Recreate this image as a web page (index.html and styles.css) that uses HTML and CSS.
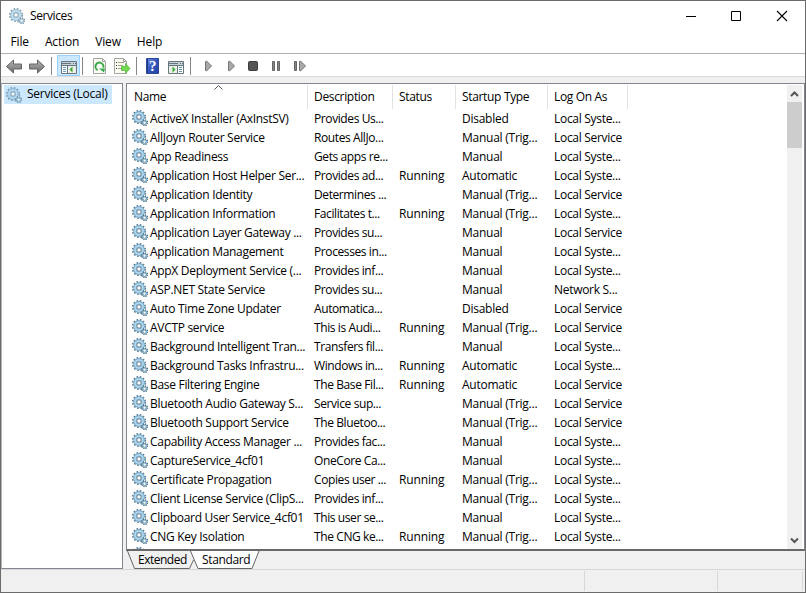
FILE: index.html
```html
<!DOCTYPE html>
<html lang="en">
<head>
<meta charset="utf-8">
<title>Services</title>
<link rel="stylesheet" href="styles.css">
</head>
<body>
<svg class="defs" width="0" height="0" aria-hidden="true">
  <defs>
    <linearGradient id="steel" x1="0" y1="0" x2="0" y2="1"><stop offset="0" stop-color="#b5b5b5"/><stop offset="1" stop-color="#6c6c6c"/></linearGradient>
    <linearGradient id="blue" x1="0" y1="0" x2="1" y2="1"><stop offset="0" stop-color="#7090e8"/><stop offset=".5" stop-color="#3355bd"/><stop offset="1" stop-color="#2442a0"/></linearGradient>
    <symbol id="gear" viewBox="0 0 16 16">
      <circle cx="7" cy="7" r="6.2" fill="none" stroke="#557a92" stroke-width="1.8" stroke-dasharray="1.6 1.65"/>
      <circle cx="7" cy="7" r="4.2" fill="#fff" stroke="#7eacc9" stroke-width="3.4"/>
      <circle cx="7" cy="7" r="4" fill="none" stroke="#b4daf0" stroke-width="1.6"/>
      <circle cx="7" cy="7" r="2.2" fill="#fff" stroke="#4f738c" stroke-width=".9"/>
      <circle cx="12.6" cy="12.7" r="2.8" fill="#9cc2d6" stroke="#4a6e83" stroke-width="1.5" stroke-dasharray="1.1 1.1"/>
      <circle cx="12.6" cy="12.7" r="1.5" fill="#fff" stroke="#84aec5" stroke-width="1"/>
    </symbol>
  </defs>
</svg>
<div class="window">
  <header class="titlebar">
    <svg class="gear pale"><use href="#gear"/></svg>
    <span class="title">Services</span>
    <svg class="controls" width="103" height="12" viewBox="0 0 103 12" fill="none" stroke="#000">
      <path d="M0 6.5h10M45.5 1.5h9v9h-9z"/><path d="M91 1l10 10M101 1L91 11" stroke-width="1.1"/>
    </svg>
  </header>
  <nav class="menu"><span>File</span><span>Action</span><span>View</span><span>Help</span></nav>
  <div class="toolbar">
    <svg width="400" height="22" viewBox="0 0 400 22">
      <g fill="url(#steel)" stroke="#646464" stroke-width="1" stroke-linejoin="round">
        <path d="M6.500 12.500l7-6.500v4h8v5h-8v4z"/><path d="M44.500 12.500l-7-6.500v4h-8v5h8v4z"/>
      </g>
      <path d="M51.500 3v18M82.500 3v18M136.500 3v18M190.500 3v18" stroke="#868686"/>
      <path d="M57.500 1.500h22v20h-22z" fill="#cce8ff" stroke="#99d1ff"/>
      <g>
        <path d="M61.500 7.500h15v12h-15z" fill="#fff" stroke="#68777f"/>
        <path d="M62 8h14v3H62z" fill="#c5d0d5"/><path d="M62 9.500h9M73 9.500h1M75 9.500h1M62 11.500h14M67.500 12v7" stroke="#68777f"/>
        <path d="M63 13.500h3M63 15.500h3M63 17.500h3" stroke="#6f9ab5"/><path d="M68 12h8v7h-8z" fill="#eaf0e8"/><path d="M72.500 12.500v6l-3-3z" fill="#3fa536"/>
      </g>
      <g fill="#fbfbf6" stroke="#a5a5a0"><path d="M93.500 4.500h9l3 3v12h-12zM102.500 4.500v3h3"/><path d="M114.500 4.500h9l3 3v12h-12zM123.500 4.500v3h3"/></g>
      <path d="M97.700 16.200a4 4 0 1 1 5.600-2.500" fill="none" stroke="#39a846" stroke-width="2"/><path d="M99 14.500h6l-1 4z" fill="#39a846"/>
      <path d="M116 8.500h1M116 11.500h1M116 14.500h1" stroke="#333"/><path d="M118 8.500h6M118 11.500h5M118 14.500h5" stroke="#a9a47f"/>
      <path d="M121.500 12.500h4v-3l4.500 5-4.500 5v-3h-4z" fill="#73d850" stroke="#53b13b" stroke-width=".7"/>
      <path d="M146.500 4.500h12v15h-12z" fill="url(#blue)" stroke="#2d479b"/><path d="M147.500 5v14" stroke="#203781"/>
      <text x="149" y="17" class="question">?</text>
      <g>
        <path d="M168.500 7.500h15v12h-15z" fill="#fff" stroke="#68777f"/>
        <path d="M169 8h14v3h-14z" fill="#c5d0d5"/><path d="M169 9.500h9M180 9.500h1M182 9.500h1M169 11.500h14M177.500 12v7" stroke="#68777f"/>
        <path d="M179 13.500h3M179 15.500h3M179 17.500h3" stroke="#6f9ab5"/><path d="M169 12h8v7h-8z" fill="#eaf0e8"/><path d="M172.500 12.500v6l3-3z" fill="#3fa536"/>
      </g>
      <g fill="#a9a9a9" stroke="#747474"><path d="M205.500 7.500l1-.5 5 5-5 5-1-.5zM228.500 7.500l1-.5 5 5-5 5-1-.5zM299.500 7.500l1-.5 5 5-5 5-1-.5z"/></g>
      <rect x="248.500" y="7.500" width="9" height="9" rx="1" fill="#555" stroke="#3d3d3d"/>
      <path d="M272.500 7.500h2v9h-2zM277.500 7.500h2v9h-2zM294.500 7.500h2v9h-2z" fill="#888" stroke="#646464"/>
    </svg>
  </div>
  <main class="workspace">
    <aside class="tree"><div class="node"><svg class="gear pale"><use href="#gear"/></svg><span>Services (Local)</span></div></aside>
    <section class="content">
      <div class="list">
        <div class="table">
          <div class="head"><span>Name<svg class="sort" width="9" height="5" viewBox="0 0 9 5"><path d="M.5 4.500l4-4 4 4" fill="none" stroke="#555"/></svg></span><span>Description</span><span>Status</span><span>Startup Type</span><span>Log On As</span></div>
          <div class="rows" id="rows"></div>
        </div>
        <div class="scrollbar">
          <svg width="15" height="17" viewBox="0 0 15 17"><path d="M4 11l3.500-3.500L11 11" fill="none" stroke="#555" stroke-width="2"/></svg>
          <div class="thumb"></div>
          <svg class="down" width="15" height="17" viewBox="0 0 15 17"><path d="M4 6.500L7.500 10 11 6.500" fill="none" stroke="#555" stroke-width="2"/></svg>
        </div>
      </div>
      <div class="tabs">
        <svg class="tabshape" width="140" height="19" viewBox="0 0 140 19"><path d="M1.500 0l7 17.500h55l4-8.500" fill="#f0f0f0" stroke="#666"/><path d="M64.500 0l7.500 17.500h54l7-17.500z" fill="#fff"/><path d="M64.500 0l7.500 17.500h54l7-17.500" fill="none" stroke="#666"/></svg>
        <span class="tab">Extended</span><span class="tab">Standard</span>
      </div>
    </section>
  </main>
  <footer class="status"><i></i><i></i><i></i></footer>
</div>
<script src="script.js"></script>
</body>
</html>
```
FILE: styles.css
```css
* { box-sizing: border-box; }
body { margin: 0; background: #fff; color: #000; font: 12px/19px "Open Sans", "Noto Sans", sans-serif; overflow: hidden; }
.defs { position: absolute; }
svg { display: block; flex: none; }
.window { width: 806px; height: 593px; border: 1px solid #6b6b6b; display: flex; flex-direction: column; background: #fff; }
.titlebar { height: 29px; display: flex; align-items: center; padding: 0 16px 0 8px; }
.title { margin-left: 5px; letter-spacing: -.4px; }
.controls { margin-left: auto; }
.gear { width: 16px; height: 16px; }
.pale { opacity: .75; }
.menu { height: 24px; display: flex; gap: 16px; padding: 2px 0 0 9.500px; border-bottom: 1px solid #b0b0b0; letter-spacing: -.15px; }
.toolbar { height: 23px; border-bottom: 1px solid #d9d9d9; }
.toolbar svg { margin-left: -1px; }
.question { font: bold 15px "Liberation Serif", serif; fill: #fff; }
.workspace { height: 492px; padding-top: 6px; background: #f0f0f0; display: flex; gap: 3px; }
.tree { width: 122px; border: 1px solid #828790; border-left-color: #b5b5b5; background: #fff; padding: 1px 0 0 2px; }
.node { width: 108px; height: 19px; background: #cce8ff; display: flex; align-items: center; padding-left: 2px; white-space: nowrap; letter-spacing: -.25px; line-height: 17px; }
.node span { margin-left: 5px; padding-bottom: 2px; }
.content { width: 679px; display: flex; flex-direction: column; }
.list { height: 468px; border: 1px solid #828790; border-bottom: 2px solid #696969; background: #fff; display: flex; justify-content: space-between; padding: 1px 2px 0 0; }
.table { width: 501px; height: 464px; overflow: hidden; }
.head, .row { display: grid; grid-template-columns: 181px 85px 63px 92px 80px; white-space: nowrap; }
.head { height: 24px; }
.head span { border-right: 1px solid #e2e2e2; padding: 2px 0 0 6px; position: relative; letter-spacing: -.33px; }
.head span:first-child { padding-left: 7px; }
.sort { position: absolute; left: 87px; top: 0; }
.row { height: 19px; letter-spacing: -.3px; }
.row > span { padding-left: 6px; }
.row > span:nth-child(2) { letter-spacing: -.4px; }
.row > span:nth-child(3) { letter-spacing: -.15px; }
.row > span:nth-child(4) { letter-spacing: -.25px; }
.row > .name { display: flex; align-items: center; padding-left: 5px; }
.name .gear { margin-top: -1px; }
.name b { font-weight: normal; margin-left: 2px; }
.scrollbar { width: 15px; height: 464px; background: #f0f0f0; display: flex; flex-direction: column; }
.thumb { height: 46px; background: #cdcdcd; }
.down { margin-top: auto; }
.tabs { position: relative; height: 18px; display: flex; padding-left: 12px; gap: 16px; line-height: 17px; }
.tabshape { position: absolute; left: 0; top: 0; }
.tab { position: relative; width: 48px; white-space: nowrap; letter-spacing: -.5px; }
.tab + .tab { letter-spacing: -.35px; }
.status { height: 23px; border-top: 1px solid #d7d7d7; background: #f0f0f0; display: grid; grid-template-columns: 584px 133px 85px; padding-top: 1px; }
.status i { border-right: 1px solid #d7d7d7; height: 20px; }
```
FILE: script.js
```js
const services = `ActiveX Installer (AxInstSV)|Provides Us...||Disabled|Local Syste...
AllJoyn Router Service|Routes AllJo...||Manual (Trig...|Local Service
App Readiness|Gets apps re...||Manual|Local Syste...
Application Host Helper Ser...|Provides ad...|Running|Automatic|Local Syste...
Application Identity|Determines ...||Manual (Trig...|Local Service
Application Information|Facilitates t...|Running|Manual (Trig...|Local Syste...
Application Layer Gateway ...|Provides su...||Manual|Local Service
Application Management|Processes in...||Manual|Local Syste...
AppX Deployment Service (...|Provides inf...||Manual|Local Syste...
ASP.NET State Service|Provides su...||Manual|Network S...
Auto Time Zone Updater|Automatica...||Disabled|Local Service
AVCTP service|This is Audi...|Running|Manual (Trig...|Local Service
Background Intelligent Tran...|Transfers fil...||Manual|Local Syste...
Background Tasks Infrastru...|Windows in...|Running|Automatic|Local Syste...
Base Filtering Engine|The Base Fil...|Running|Automatic|Local Service
Bluetooth Audio Gateway S...|Service sup...||Manual (Trig...|Local Service
Bluetooth Support Service|The Bluetoo...||Manual (Trig...|Local Service
Capability Access Manager ...|Provides fac...||Manual|Local Syste...
CaptureService_4cf01|OneCore Ca...||Manual|Local Syste...
Certificate Propagation|Copies user ...|Running|Manual (Trig...|Local Syste...
Client License Service (ClipS...|Provides inf...||Manual (Trig...|Local Syste...
Clipboard User Service_4cf01|This user se...||Manual|Local Syste...
CNG Key Isolation|The CNG ke...|Running|Manual (Trig...|Local Syste...
||||`.split('\n');
document.getElementById('rows').innerHTML = services.map(line => {
  const [name, ...cells] = line.split('|');
  return `<div class="row"><span class="name"><svg class="gear"><use href="#gear"/></svg><b>${name}</b></span>${cells.map(c => `<span>${c}</span>`).join('')}</div>`;
}).join('');
```
